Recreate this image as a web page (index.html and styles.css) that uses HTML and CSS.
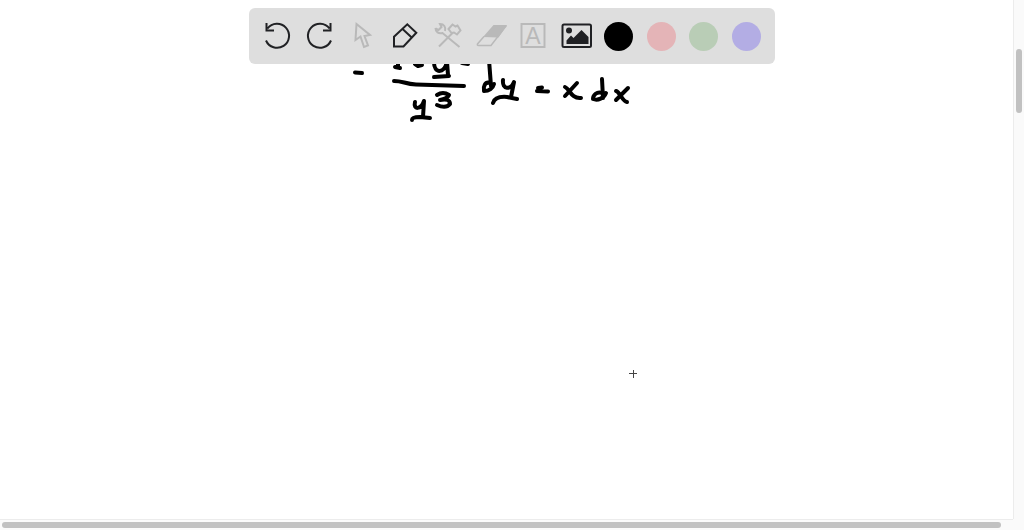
FILE: index.html
```html
<!DOCTYPE html>
<html lang="en">
<head>
    <meta charset="UTF-8">
    <meta name="viewport" content="width=device-width, initial-scale=1.0">
    <title>Whiteboard</title>
    <link rel="stylesheet" href="styles.css">
</head>
<body>
    <div class="toolbar" role="toolbar" aria-label="Drawing tools">
        <button class="tool" type="button" aria-label="Undo">
            <svg viewBox="0 0 32 32"><path d="M5 20.500A12 12 0 1 0 6.500 8.500M5.500 3v7.500H13"/></svg>
        </button>
        <button class="tool" type="button" aria-label="Redo">
            <svg viewBox="0 0 32 32"><path d="M27 20.500A12 12 0 1 1 25.500 8.500M26.500 3v7.500H19"/></svg>
        </button>
        <button class="tool muted" type="button" aria-label="Select">
            <svg viewBox="0 0 32 32"><path d="M9.500 4L8.500 20l5-3.500 3.500 10.500 4-1.500-3.500-9.500 5.500-1z"/></svg>
        </button>
        <button class="tool" type="button" aria-label="Pen">
            <svg viewBox="0 0 32 32"><path d="M5 16.700v9.800h9.500L27.300 12.700l-9-8.400zM13.300 8.800l9.400 8.800"/></svg>
        </button>
        <button class="tool muted" type="button" aria-label="Tools">
            <svg viewBox="0 0 32 32">
                <path d="M3.500 8c0 4 3 6 7 5L27.500 27M3.500 8.500l3 1.500 3-3-1.500-3c4 0 6 3 5 7"/>
                <path d="M7 26.500L20.500 13M16.500 9l4-4.500 3 2 2-1 3 5-3.500 4-3-2-2.500.5z"/>
            </svg>
        </button>
        <button class="tool muted" type="button" aria-label="Eraser">
            <svg viewBox="0 0 32 32">
                <path class="solid" d="M18.500 5H32L23.500 17.500 8 17z"/>
                <path class="edge" d="M9 16.500L2.500 24q-.5 1.500 1 1.500H16L31.500 5.500"/>
            </svg>
        </button>
        <button class="tool muted" type="button" aria-label="Text">
            <svg viewBox="0 0 32 32"><path d="M4.500 4h23v23h-23z"/><text x="16" y="24" text-anchor="middle">A</text></svg>
        </button>
        <button class="tool" type="button" aria-label="Image">
            <svg viewBox="0 0 32 32">
                <rect x="2.500" y="4.500" width="28.500" height="22.500" rx="1.500"/>
                <circle class="solid" cx="9" cy="10.500" r="3"/>
                <path class="solid" d="M6.500 24v-3.500l4.500-5 2.500 2.500 8-8 7 7v7z"/>
            </svg>
        </button>
        <button class="tool" type="button" aria-label="Black"><span class="swatch black"></span></button>
        <button class="tool" type="button" aria-label="Red"><span class="swatch red"></span></button>
        <button class="tool" type="button" aria-label="Green"><span class="swatch green"></span></button>
        <button class="tool" type="button" aria-label="Blue"><span class="swatch blue"></span></button>
    </div>

    <main class="board">
        <svg class="ink" width="700" height="400" role="img" aria-label="Handwritten equation">
            <!-- left side -->
            <path d="M355 72.500L362 73"/>
            <path d="M398 62V66M395 67L400 68M415 64L418 66L422 65"/>
            <path d="M434 62C434 74 444 74 447 62L448 75M434 77L449 76"/>
            <path d="M462 63L468 64"/>
            <path d="M394 81C403 81 405 84 416 84.500L464 86"/>
            <path d="M415 102C413 110 421 110 424 101L423 117M412 120Q412 117 420 117L430 118"/>
            <path d="M437 95Q443 91 449 95Q447 99 440 100Q450 98 450 104Q446 109 437 105"/>
            <!-- dy -->
            <path d="M489 60L491 86M490 83C485 81 483 87 484 91C489 91 493 88 494 84"/>
            <path d="M503 80C502 90 511 90 514 82L511 97M493 103Q495 96 507 97L517 99"/>
            <!-- x dx -->
            <path d="M538 88L542 87.500M537 91L548 91.500"/>
            <path d="M565 87C570 89 571 99 581 98M577 83L565 96"/>
            <path d="M602 79L603 98M602 93C597 91 593 95 593 99C598 101 604 98 606 93"/>
            <path d="M616 91C620 92 622 101 627 102M628 88L616 100"/>
            <!-- pen position -->
            <path class="crosshair" d="M629 373.500h8M633.500 370v8"/>
        </svg>
    </main>

    <div class="track vertical" aria-hidden="true"><div class="thumb"></div></div>
    <div class="track horizontal" aria-hidden="true"><div class="thumb"></div></div>
</body>
</html>
```
FILE: styles.css
```css
* {
    box-sizing: border-box;
}

body {
    display: grid;
    grid-template-columns: 1fr 11px;
    grid-template-rows: 1fr 11px;
    height: 100vh;
    margin: 0;
    font-family: "Liberation Sans", Arial, sans-serif;
    background-color: #fafafa;
}

/* Toolbar floats over the board */
.toolbar {
    position: absolute;
    top: 8px;
    left: 0;
    right: 0;
    display: grid;
    grid-template-columns: repeat(12, 1fr);
    max-width: 526px;
    margin: 0 auto;
    padding: 0 7px;
    border-radius: 6px;
    background-color: #dedede;
}

.tool {
    display: flex;
    align-items: center;
    justify-content: center;
    height: 56px;
    padding: 0;
    border: none;
    background: none;
    color: #202124;
    cursor: pointer;
}

.tool svg {
    flex: none;
    width: 32px;
    height: 32px;
    fill: none;
    stroke: currentColor;
    stroke-width: 2;
}

.tool .edge {
    stroke-width: 1.5;
}

.tool .solid,
.tool text {
    fill: currentColor;
    stroke: none;
}

.tool text {
    font-size: 23px;
}

.muted {
    color: #b9b9b9;
}

.swatch {
    width: 29px;
    height: 29px;
    border-radius: 50%;
}

.black {
    background-color: #000000;
}

.red {
    background-color: #e4b4b7;
}

.green {
    background-color: #b9cdb6;
}

.blue {
    background-color: #b3ade4;
}

.board {
    overflow: hidden;
    background-color: #ffffff;
    cursor: crosshair;
}

.ink {
    display: block;
    fill: none;
    stroke: #000000;
    stroke-width: 4;
    stroke-linecap: round;
    stroke-linejoin: round;
}

.crosshair {
    stroke: #444444;
    stroke-width: 1;
    stroke-linecap: butt;
}

/* Scrollbars */
.thumb {
    border-radius: 3px;
    background-color: #c1c1c1;
}

.vertical {
    display: grid;
    grid-template-rows: 49fr 64fr 406fr;
    padding: 0 2px;
    border-left: 1px solid #ececec;
}

.vertical .thumb {
    grid-row: 2;
}

.horizontal {
    padding: 2px;
    border-top: 1px solid #ececec;
}

.horizontal .thumb {
    width: 99%;
    height: 6px;
}
```
